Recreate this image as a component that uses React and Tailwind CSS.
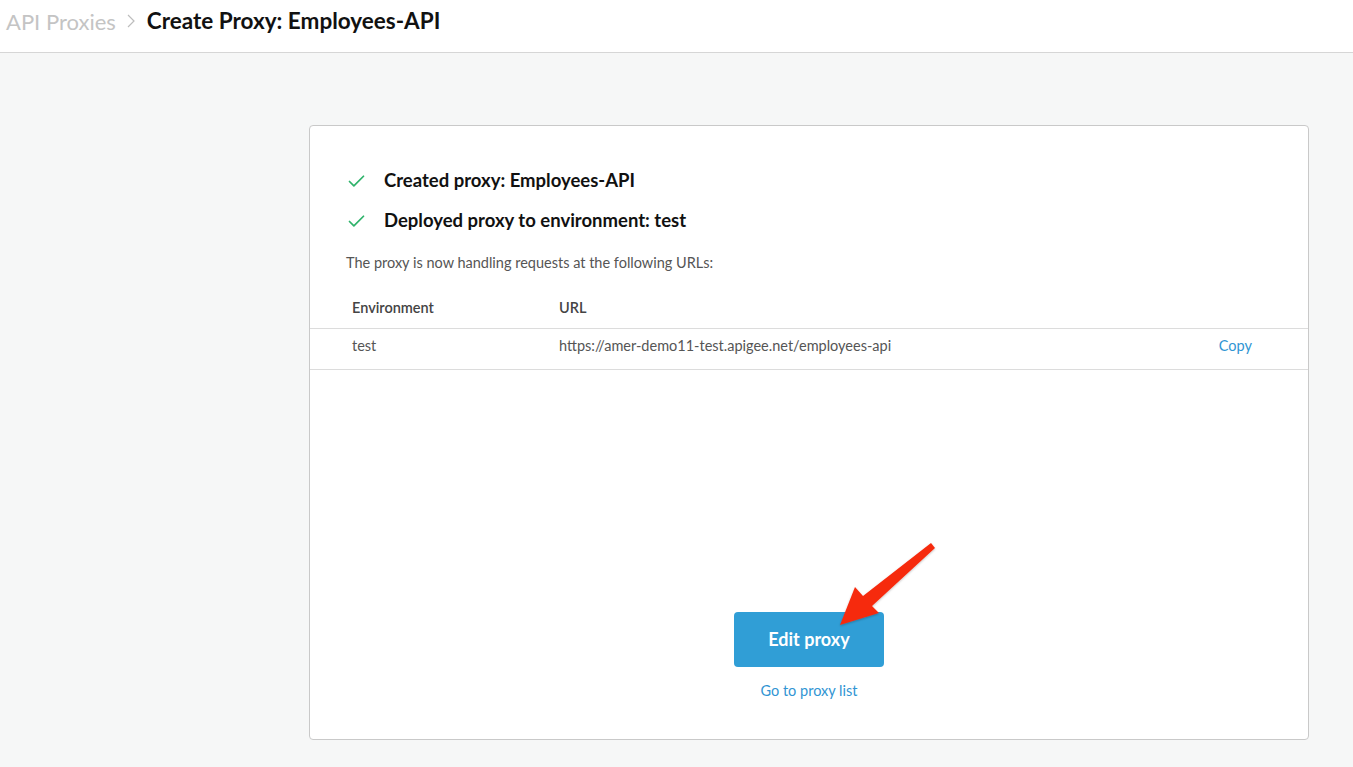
import { Check } from 'lucide-react';

const font = { fontFamily: 'Lato, "Open Sans", sans-serif' };

function Arrow() {
  return (
    <svg className="absolute left-[830px] top-[540px] pointer-events-none" width="110" height="95" viewBox="0 0 110 95">
      <defs>
        <filter id="sh" x="-20%" y="-20%" width="140%" height="140%">
          <feDropShadow dx="0" dy="1" stdDeviation="1" floodColor="#000" floodOpacity="0.25" />
        </filter>
      </defs>
      <path d="M105 8 L42 66 L49 73 L10 85 L25 47 L33 56 L101 3 Z" fill="#f62b11" filter="url(#sh)" />
    </svg>
  );
}

export default function App() {
  return (
    <div className="min-h-[767px] bg-[#f6f7f7] text-[#222]" style={font}>
      <div className="h-[53px] bg-white border-b border-[#d6d6d6] flex items-center px-[6px] pb-[10px]">
        <span className="text-[22px] text-[#c4c4c4]">API Proxies</span>
        <svg className="ml-[11px] mr-[12px]" width="8" height="14" viewBox="0 0 8 14">
          <path d="M1 1 L7 7 L1 13" fill="none" stroke="#bdbdbd" strokeWidth="1.2" />
        </svg>
        <span className="text-[22.5px] font-bold text-[#111]">Create Proxy: Employees-API</span>
      </div>

      <div className="pt-[72px] pl-[309px]">
        <div className="w-[1000px] h-[615px] bg-white border border-[#c9c9c9] rounded-[4px] flex flex-col">
          <div className="pt-[41px] px-[36px]">
            <div className="flex items-center h-[28px] gap-[17px]">
              <Check size={21} strokeWidth={2} className="text-[#2fb36b]" />
              <span className="text-[18.5px] font-bold text-[#111]">Created proxy: Employees-API</span>
            </div>
            <div className="flex items-center h-[28px] mt-[12px] gap-[17px]">
              <Check size={21} strokeWidth={2} className="text-[#2fb36b]" />
              <span className="text-[18.5px] font-bold text-[#111]">Deployed proxy to environment: test</span>
            </div>
            <p className="mt-[18px] text-[14.5px] leading-[20px] text-[#555]">The proxy is now handling requests at the following URLs:</p>
          </div>

          <div className="mt-[15px] text-[14.5px]">
            <div className="flex items-center h-[41px] px-[42px] text-[#444] font-semibold border-b border-[#dcdcdc]">
              <span className="w-[207px]">Environment</span>
              <span>URL</span>
            </div>
            <div className="flex items-center h-[41px] pb-[7px] px-[42px] text-[#555] border-b border-[#dcdcdc]">
              <span className="w-[207px]">test</span>
              <span className="flex-1">https://amer-demo11-test.apigee.net/employees-api</span>
              <span className="text-[#3195d3] pr-[14px]">Copy</span>
            </div>
          </div>

          <div className="flex-1 flex flex-col items-center justify-end pb-[37px]">
            <button className="w-[150px] h-[55px] rounded-[4px] bg-[#309ed6] text-white text-[18px] font-bold">Edit proxy</button>
            <a className="mt-[13px] text-[14.5px] text-[#3195d3]">Go to proxy list</a>
          </div>
        </div>
      </div>
      <Arrow />
    </div>
  );
}
